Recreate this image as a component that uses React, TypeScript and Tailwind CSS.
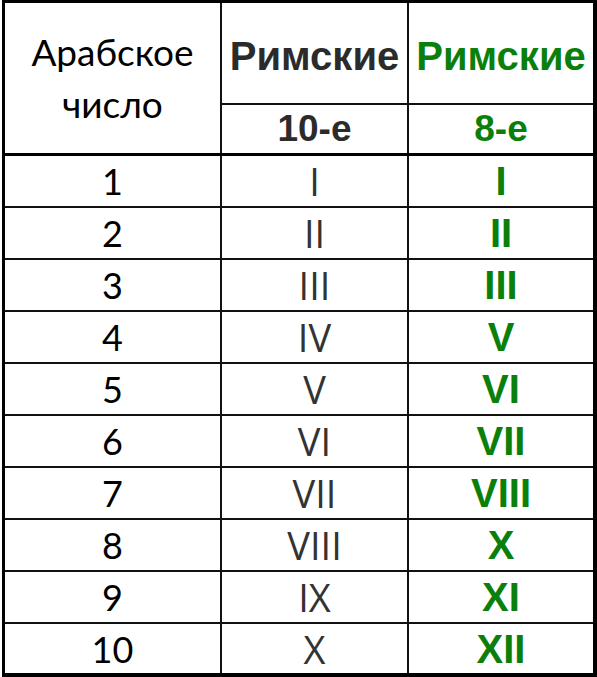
import React from "react";

const rows = [
  { n: "1", r10: "I", r8: "I" },
  { n: "2", r10: "II", r8: "II" },
  { n: "3", r10: "III", r8: "III" },
  { n: "4", r10: "IV", r8: "V" },
  { n: "5", r10: "V", r8: "VI" },
  { n: "6", r10: "VI", r8: "VII" },
  { n: "7", r10: "VII", r8: "VIII" },
  { n: "8", r10: "VIII", r8: "X" },
  { n: "9", r10: "IX", r8: "XI" },
  { n: "10", r10: "X", r8: "XII" }
];

const calibri = "font-['Lato','Open_Sans',sans-serif]";
const arial = "font-['Liberation_Sans',Arial,sans-serif]";

const App: React.FC = () => {
  return (
    <div className="w-[597px] h-[677px] bg-white pl-[2px]">
      <div className="h-full flex flex-col border-t-[3px] border-l-[3px] border-r-4 border-b-4 border-black">
        {/* header */}
        <div className="flex h-[153px] border-b-[3px] border-black">
          <div className={`w-[217px] border-r-2 border-[#111] flex flex-col items-center justify-center text-[37px] leading-[52px] text-black ${calibri}`}>
            <span>Арабское</span>
            <span>число</span>
          </div>
          <div className="flex-1 flex flex-col">
            <div className="flex h-[102px] border-b-2 border-[#111]">
              <div className={`w-[187px] border-r-2 border-[#111] flex items-center justify-center pt-[5px] text-[40px] leading-none font-bold text-[#2b2b2b] ${arial}`}>
                Римские
              </div>
              <div className={`flex-1 flex items-center justify-center pt-[5px] text-[40px] leading-none font-bold text-[#0a800a] ${arial}`}>
                Римские
              </div>
            </div>
            <div className="flex flex-1">
              <div className={`w-[187px] border-r-2 border-[#111] flex items-center justify-center pb-[2px] text-[37px] leading-none font-bold text-[#2b2b2b] ${arial}`}>
                10-е
              </div>
              <div className={`flex-1 flex items-center justify-center pb-[2px] text-[37px] leading-none font-bold text-[#0a800a] ${arial}`}>
                8-е
              </div>
            </div>
          </div>
        </div>

        {/* rows */}
        {rows.map((row, i) => (
          <div
            key={row.n}
            className={`flex ${i < rows.length - 1 ? "h-[52px] border-b-2 border-[#111]" : "flex-1"}`}
          >
            <div className={`w-[217px] border-r-2 border-[#111] flex items-center justify-center text-[36px] leading-none text-black ${calibri}`}>
              {row.n}
            </div>
            <div className="w-[187px] border-r-2 border-[#111] flex items-center justify-center text-[38px] leading-none font-normal text-[#333] font-['Open_Sans',sans-serif]">
              {row.r10}
            </div>
            <div className={`flex-1 flex items-center justify-center text-[40px] leading-none font-bold text-[#0a800a] ${arial}`}>
              {row.r8}
            </div>
          </div>
        ))}
      </div>
    </div>
  );
};

export default App;
